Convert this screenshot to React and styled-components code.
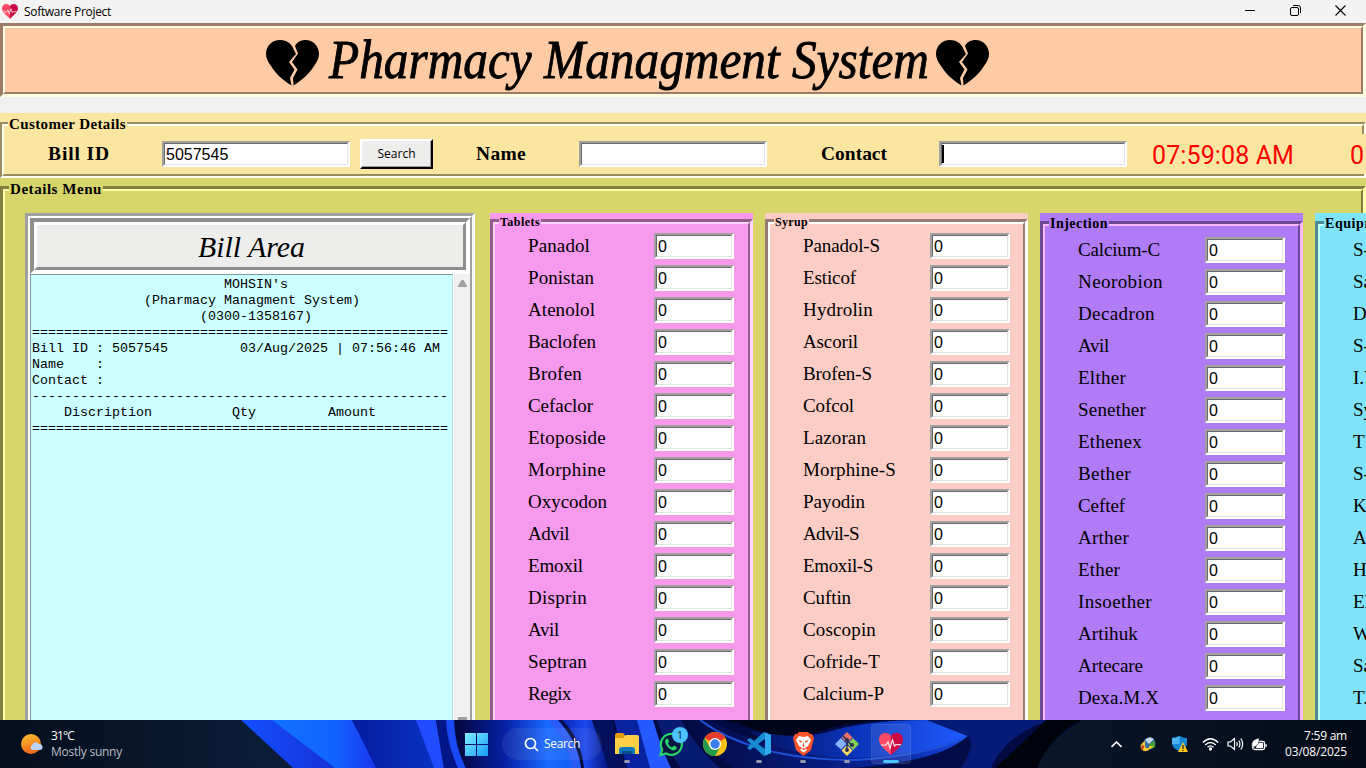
import React, { useLayoutEffect, useRef, useState } from "react";
import styled, { createGlobalStyle, css } from "styled-components";

const Global = createGlobalStyle`
  * { box-sizing: border-box; }
  html, body { margin: 0; padding: 0; overflow: hidden; background: #f0f0f0; }
  body { font-family: "Liberation Serif", serif; color: #000; }
`;

const Desktop = styled.div`
  width: 1366px;
  height: 768px;
  display: flex;
  flex-direction: column;
  overflow: hidden;
`;

/* Text stretched to a given width */
const FitBox = styled.span`
  display: block;
  width: ${(p) => p.$w}px;
  white-space: pre;
`;
const FitInner = styled.span`
  display: inline-block;
  transform-origin: 0 50%;
  white-space: pre;
`;
function Fit({ w, stretch, children }) {
  const ref = useRef(null);
  const [style, setStyle] = useState({});
  useLayoutEffect(() => {
    const exact = ref.current.getBoundingClientRect().width;
    setStyle(
      stretch
        ? { transform: `scaleX(${w / exact})` }
        : { letterSpacing: `${(w - exact) / children.length}px` }
    );
  }, []);
  return (
    <FitBox $w={w}>
      <FitInner ref={ref} style={style}>{children}</FitInner>
    </FitBox>
  );
}

/* Title bar */
const TitleBar = styled.header`
  height: 23px;
  flex: none;
  background: #f3f3f3;
  display: flex;
  align-items: center;
  padding: 0 20px 0 2px;
  font: 12px "Open Sans", "Noto Sans", sans-serif;
`;
const TitleText = styled.span`
  margin-left: 6px;
  flex: 1;
`;
const WindowButtons = styled.div`
  display: flex;
  gap: 34px;
  height: 20px;
  align-items: center;
  margin-bottom: 2px;
`;

/* Grooved borders */
const GrooveOuter = styled.div`
  border: solid;
  border-width: ${(p) => p.$o[0]}px ${(p) => p.$o[1]}px ${(p) => p.$o[1]}px ${(p) => p.$o[0]}px;
  border-color: ${(p) => `${p.$dark} ${p.$light} ${p.$light} ${p.$dark}`};
  flex: 1;
  display: flex;
  min-width: 0;
`;
const GrooveInner = styled.div`
  border: solid;
  border-width: ${(p) => p.$o[1]}px ${(p) => p.$o[0]}px ${(p) => p.$o[0]}px ${(p) => p.$o[1]}px;
  border-color: ${(p) => `${p.$light} ${p.$dark} ${p.$dark} ${p.$light}`};
  flex: 1;
  display: flex;
  min-width: 0;
`;
function Groove({ outer, inner, dark, light, children }) {
  return (
    <GrooveOuter $o={outer} $dark={dark} $light={light}>
      <GrooveInner $o={inner} $dark={dark} $light={light}>{children}</GrooveInner>
    </GrooveOuter>
  );
}

const Banner = styled.div`
  height: 74px;
  flex: none;
  display: flex;
  background: #ffcba4;
  margin-bottom: 16px;
`;
const BannerContent = styled.div`
  flex: 1;
  display: flex;
  align-items: flex-start;
  padding-left: 261px;
`;
const HeartSlot = styled.div`
  padding-top: 12px;
  height: 60px;
`;
const BannerText = styled.h1`
  margin: 2px 7px 0 9px;
  font: italic 55px/60px "Liberation Serif", serif;
  -webkit-text-stroke: 0.9px #000;
`;

const Frame = styled.section`
  position: relative;
  display: flex;
  background: ${(p) => p.$bg};
  padding-top: ${(p) => p.$pad}px;
  height: ${(p) => (p.$h ? p.$h + "px" : "auto")};
  flex: none;
`;
const Legend = styled.h2`
  position: absolute;
  margin: 0;
  left: ${(p) => p.$x}px;
  top: ${(p) => p.$y}px;
  padding: 0 1px;
  background: ${(p) => p.$bg};
  font: bold ${(p) => p.$size}px/16px "Liberation Serif", serif;
`;

const sunken = css`
  border: 2px solid;
  border-color: #a0a0a0 #fff #fff #a0a0a0;
`;
const EntryOuter = styled.div`
  ${sunken}
  width: ${(p) => p.$w}px;
  height: 26px;
  display: flex;
  flex: none;
  margin-left: ${(p) => p.$ml || 0}px;
`;
const EntryInner = styled.div`
  flex: 1;
  background: #fff;
  border: 1px solid;
  border-color: #696969 #e3e3e3 #e3e3e3 #696969;
  font: 16px/21px "Liberation Sans", sans-serif;
  padding-left: 1px;
  display: flex;
`;
const Caret = styled.i`
  width: 2px;
  height: 18px;
  margin: 1px 0 0 -1px;
  background: #000;
`;
function Entry({ w, ml, children }) {
  return (
    <EntryOuter $w={w} $ml={ml}>
      <EntryInner>{children}</EntryInner>
    </EntryOuter>
  );
}

const CustomerRow = styled.div`
  position: relative;
  z-index: 1;
  flex: 1;
  display: flex;
  align-items: flex-start;
  padding: 13px 0 0 44px;
`;
const FieldLabel = styled.div`
  font: bold 19.5px/26px "Liberation Serif", serif;
  margin: 2px 0 0 ${(p) => p.$ml || 0}px;
`;
const SearchButton = styled.button`
  width: 73px;
  height: 30px;
  margin: 0 0 0 10px;
  padding: 0;
  background: #ededeb;
  border: 2px solid;
  border-color: #fff #000 #000 #fff;
  box-shadow: inset -1px -1px 0 #a0a0a0;
  font: 12px/24px "Open Sans", sans-serif;
`;
const Lowered = styled.div`
  padding-top: 2px;
`;
const Clock = styled.div`
  margin: 4px 0 0 ${(p) => p.$ml}px;
  color: #f00;
  font: 25px/26px Roboto, sans-serif;
  flex: none;
`;
const EdgeFill = styled.div`
  position: absolute;
  right: 0;
  top: 21px;
  width: 4px;
  height: 40px;
  background: #fbe6a1;
`;

const DetailsBody = styled.div`
  flex: 1;
  display: flex;
  align-items: flex-start;
  padding: 22px 0 0 20px;
  height: 512px;
`;
const BillFrame = styled.div`
  width: 450px;
  height: 520px;
  flex: none;
  display: flex;
  background: #fff;
  margin-right: 15px;
`;
const BillColumn = styled.div`
  flex: 1;
  display: flex;
  flex-direction: column;
`;
const BillHeading = styled.div`
  height: 56px;
  display: flex;
  background: #ededeb;
  flex: none;
`;
const BillHeadingText = styled.h3`
  margin: 0 0 0 161px;
  font: italic 30px/44px "Liberation Serif", serif;
`;
const BillRow = styled.div`
  flex: 1;
  display: flex;
`;
const BillText = styled.pre`
  margin: 0 1px 0 0;
  width: 423px;
  background: #ccffff;
  border: 1px solid;
  border-color: #7a9a9a #b8e6e6 #b8e6e6 #7a9a9a;
  padding: 2px 1px 1px;
  font: 13.33px/16px "Liberation Mono", monospace;
`;
const Scrollbar = styled.div`
  flex: 1;
  background: #f0f0f0;
  display: flex;
  flex-direction: column;
  align-items: center;
  padding-top: 6px;
`;

const ItemPanel = styled(Frame)`
  height: 520px;
  width: 263px;
  margin-right: 12px;
`;
const ItemList = styled.div`
  flex: 1;
  padding: ${(p) => p.$top}px 0 0 33px;
`;
const ItemRow = styled.div`
  height: 32px;
  display: flex;
`;
const ItemName = styled.div`
  width: 126px;
  flex: none;
  font: 19px/26px "Liberation Serif", serif;
  white-space: nowrap;
`;
const Window = styled.main`
  height: 720px;
  flex: none;
  overflow: hidden;
`;

const PANELS = [
  {
    title: "Tablets", bg: "#f799ec", dark: "#945c8d", light: "#ffd5ff", pad: 6, size: 12, legendY: 1, lw: 40, gap: 0,
    items: [["Panadol", 62], ["Ponistan", 66], ["Atenolol", 67], ["Baclofen", 68], ["Brofen", 54], ["Cefaclor", 65], ["Etoposide", 78], ["Morphine", 78], ["Oxycodon", 79], ["Advil", 41], ["Emoxil", 55], ["Disprin", 59], ["Avil", 31], ["Septran", 59], ["Regix", 43]],
  },
  {
    title: "Syrup", bg: "#fccdc5", dark: "#977b76", light: "#ffffff", pad: 6, size: 12, legendY: 1, lw: 33, gap: 1,
    items: [["Panadol-S", 77], ["Esticof", 53], ["Hydrolin", 70], ["Ascoril", 55], ["Brofen-S", 69], ["Cofcol", 51], ["Lazoran", 63], ["Morphine-S", 93], ["Payodin", 62], ["Advil-S", 56], ["Emoxil-S", 70], ["Cuftin", 48], ["Coscopin", 73], ["Cofride-T", 77], ["Calcium-P", 81]],
  },
  {
    title: "Injection", bg: "#b07bf7", dark: "#6a4a94", light: "#f9b8ff", pad: 8, size: 14, legendY: 3, lw: 58, gap: 1,
    items: [["Calcium-C", 82], ["Neorobion", 85], ["Decadron", 77], ["Avil", 31], ["Elther", 48], ["Senether", 68], ["Ethenex", 64], ["Bether", 53], ["Ceftef", 47], ["Arther", 51], ["Ether", 42], ["Insoether", 74], ["Artihuk", 60], ["Artecare", 65], ["Dexa.M.X", 81]],
  },
  {
    title: "Equipment", bg: "#7fe4f9", dark: "#4c8995", light: "#bfffff", pad: 8, size: 14, legendY: 3, lw: 72, gap: 1,
    items: ["S-", "Sa", "D", "S-", "I.V", "Sy", "T", "S-", "K", "A", "H", "El", "W", "Sa", "T."].map((n) => [n, 0]),
  },
];

const RULE = "=".repeat(52);
const BILL = [
  " ".repeat(24) + "MOHSIN's",
  " ".repeat(14) + "(Pharmacy Managment System)",
  " ".repeat(21) + "(0300-1358167)",
  RULE,
  "Bill ID : 5057545         03/Aug/2025 | 07:56:46 AM",
  "Name    :",
  "Contact :",
  "-".repeat(52),
  "    Discription          Qty         Amount",
  RULE,
].join("\n");

/* Drawings */
const BrokenHeart = () => (
  <svg width="54" height="46" viewBox="0 0 54 46">
    <path d="M27 8L30 14L23 22L28.500 29.500L24 38L25.500 45.500C21 43 11 36 5 26C2 22 0 18 0 14C0 6 6 0 14 0C20 0 25 3 27 8Z" />
    <path d="M29 6C31 2 35 0 39.500 0C47 0 53 6 53 14C53 18 51 22 48 26C43 34 36 40 27.500 45.500L27 38L31.500 29.500L26 22L32 13.500Z" />
  </svg>
);
const HeartIcon = ({ size }) => (
  <svg width={size} height={size * 0.92} viewBox="0 0 24 22">
    <path d="M12 22C5 16 0 12 0 6.5C0 2.5 3 0 6.3 0C9 0 11 1.200 12 3Z" fill="#ff4a66" />
    <path d="M12 22C19 16 24 12 24 6.500C24 2.500 21 0 17.700 0C15 0 13 1.200 12 3Z" fill="#cc0a44" />
    <path d="M2 12H7L9 9L11 15L13.500 7L15.500 13L17 11.500H22" fill="none" stroke="#fbdde5" strokeWidth="1.300" />
  </svg>
);

const Taskbar = styled.footer`
  position: relative;
  height: 48px;
  flex: none;
  display: flex;
  align-items: center;
  overflow: hidden;
  background: #06111f;
  color: #fff;
  font: 12px/16px "Open Sans", "Noto Sans", sans-serif;
`;
const Wallpaper = styled.svg`
  position: absolute;
  inset: 0;
`;
const Weather = styled.div`
  position: relative;
  display: flex;
  align-items: center;
  gap: 7px;
  width: 454px;
  padding-left: 21px;
  flex: none;
`;
const Dim = styled.div`
  color: #b9bec6;
`;
const AppCell = styled.div`
  position: relative;
  width: 40px;
  height: 40px;
  margin: 0 2px;
  border-radius: 4px;
  display: flex;
  align-items: center;
  justify-content: center;
  flex: none;
  background: ${(p) => (p.$active ? "rgba(255,255,255,.09)" : "none")};
  box-shadow: ${(p) => (p.$active ? "inset 0 0 0 1px rgba(255,255,255,.07)" : "none")};
`;
const Indicator = styled.i`
  position: absolute;
  bottom: 1px;
  width: ${(p) => (p.$active ? 16 : 6)}px;
  height: 3px;
  border-radius: 2px;
  background: ${(p) => (p.$active ? "#4cc2ff" : "#9299ae")};
`;
const Badge = styled.b`
  position: absolute;
  left: 21px;
  top: 3px;
  width: 16px;
  height: 16px;
  border-radius: 8px;
  background: #4cc2ff;
  color: #10263a;
  text-align: center;
  font-weight: 400;
  font-size: 11px;
`;
const SearchPill = styled.div`
  position: relative;
  width: 100px;
  height: 32px;
  margin: 0 3px 0 4px;
  border-radius: 16px;
  background: rgba(255, 255, 255, 0.07);
  display: flex;
  align-items: center;
  gap: 5px;
  padding-left: 22px;
`;
const Tray = styled.div`
  position: relative;
  margin-left: auto;
  display: flex;
  align-items: center;
  padding-right: 19px;
`;
const TrayCell = styled.div`
  width: ${(p) => p.$w}px;
  display: flex;
  justify-content: center;
`;
const TrayClock = styled.div`
  width: 75px;
  display: flex;
  flex-direction: column;
  align-items: flex-end;
  white-space: nowrap;
`;

function Bloom() {
  return (
    <Wallpaper width="1366" height="48" viewBox="0 0 1366 48">
      <defs>
        <linearGradient id="base"><stop offset="0" stopColor="#050e1d" /><stop offset=".2" stopColor="#0b1d38" /><stop offset=".76" stopColor="#09162b" /><stop offset="1" stopColor="#030a16" /></linearGradient>
        <linearGradient id="b1"><stop offset="0" stopColor="#1250ff" /><stop offset="1" stopColor="#172bd0" /></linearGradient>
        <linearGradient id="b2"><stop offset="0" stopColor="#1173ff" /><stop offset=".6" stopColor="#1262ff" /><stop offset="1" stopColor="#1935ef" /></linearGradient>
        <linearGradient id="b3"><stop offset="0" stopColor="#061ba2" /><stop offset="1" stopColor="#0733c0" /></linearGradient>
        <linearGradient id="b4"><stop offset="0" stopColor="#02073d" /><stop offset=".4" stopColor="#0720a6" /><stop offset=".75" stopColor="#1769ff" /><stop offset="1" stopColor="#125bf2" /></linearGradient>
        <linearGradient id="b5"><stop offset="0" stopColor="#0526b5" /><stop offset=".5" stopColor="#1c48ee" /><stop offset="1" stopColor="#03127a" /></linearGradient>
        <linearGradient id="b6"><stop offset="0" stopColor="#020a42" /><stop offset=".7" stopColor="#0a2496" /><stop offset="1" stopColor="#1745e8" /></linearGradient>
        <linearGradient id="b7"><stop offset="0" stopColor="#04125e" /><stop offset=".5" stopColor="#0b35bd" /><stop offset="1" stopColor="#1f5cff" /></linearGradient>
      </defs>
      <rect width="1366" height="48" fill="url(#base)" />
      <path d="M241 0H1082C1060 14 1045 26 1037 48H293Z" fill="#020a42" />
      <path d="M241 0H290L350 48H293Z" fill="url(#b1)" />
      <path d="M272 0H352L378 48H335Z" fill="url(#b2)" />
      <path d="M352 0H420L440 48H376Z" fill="url(#b3)" />
      <path d="M416 0H436L444 48H434Z" fill="#214bff" />
      <path d="M436 0H448Q452 28 460 48H444Z" fill="#031689" />
      <path d="M446 0H454Q455 28 466 48H458Q447 24 446 0Z" fill="#1949f5" />
      <path d="M456 0H552Q572 20 578 48H466Q457 28 456 0Z" fill="url(#b4)" />
      <path d="M548 0H558Q578 22 581 48H572Q568 20 548 0Z" fill="#2a5cf5" />
      <path d="M562 0H592L609 48H584Q581 18 562 0Z" fill="url(#b5)" />
      <path d="M592 0H612L626 48H609Z" fill="#03105e" />
      <path d="M614 0H638L650 48H627Z" fill="#0822a0" />
      <path d="M637 0H653Q661 28 671 48H650Z" fill="#245aff" />
      <path d="M657 0H681Q698 30 720 48H681Q665 27 657 0Z" fill="#071b71" />
      <path d="M684 0H710Q775 39 900 32L968 16Q930 48 850 48H735Q699 26 684 0Z" fill="url(#b6)" />
      <path d="M725 0H890Q842 1 807 16Q773 18 748 7Z" fill="#00051b" />
      <path d="M748 10Q793 20 824 13Q865 0 927 0L968 16Q926 35 852 38Q780 36 748 10Z" fill="url(#b7)" />
      <path d="M700 0Q754 40 856 40Q924 36 968 17" fill="none" stroke="#1d50d8" strokeWidth="2" />
      <path d="M927 0H1050Q1005 15 991 48H950Q978 28 968 16Z" fill="#061b78" />
      <path d="M968 16Q976 25 961 48H850Q940 42 968 16Z" fill="#020d48" />
      <path d="M1046 0H1082Q1052 14 1037 48H995Q1022 24 1046 0Z" fill="#01040d" />
    </Wallpaper>
  );
}

function App() {
  return (
    <Desktop>
      <Global />
      <Window>
        <TitleBar>
          <HeartIcon size={16} />
          <TitleText><Fit w={87}>Software Project</Fit></TitleText>
          <WindowButtons>
            <svg width="11" height="11"><path d="M0 5.500H10" stroke="#000" /></svg>
            <svg width="11" height="11" fill="none" stroke="#000"><rect x=".5" y="2.500" width="8" height="8" rx="1.500" /><path d="M3 .5H8Q10.500 .5 10.500 3V8" /></svg>
            <svg width="11" height="11"><path d="M.5 .5L10.500 10.500M10.500 .5L.5 10.500" stroke="#000" strokeWidth="1.100" /></svg>
          </WindowButtons>
        </TitleBar>

        <Banner>
          <Groove outer={[3, 3]} inner={[2, 2]} dark="#9b7c64" light="#ffffe4">
            <BannerContent>
              <HeartSlot><BrokenHeart /></HeartSlot>
              <BannerText><Fit w={600} stretch>Pharmacy Managment System</Fit></BannerText>
              <HeartSlot><BrokenHeart /></HeartSlot>
            </BannerContent>
          </Groove>
        </Banner>

        <Frame $bg="#fbe6a1" $pad={9} $h={65}>
          <Groove outer={[2, 2]} inner={[2, 2]} dark="#998c62" light="#fffff0">
            <CustomerRow>
              <FieldLabel><Fit w={62}>Bill ID</Fit></FieldLabel>
              <Lowered><Entry w={188} ml={52}>5057545</Entry></Lowered>
              <SearchButton>Search</SearchButton>
              <FieldLabel $ml={43}><Fit w={50}>Name</Fit></FieldLabel>
              <Lowered><Entry w={188} ml={53} /></Lowered>
              <FieldLabel $ml={54}><Fit w={66}>Contact</Fit></FieldLabel>
              <Lowered><Entry w={188} ml={52}><Caret /></Entry></Lowered>
              <Clock $ml={25}><Fit w={142}>07:59:08 AM</Fit></Clock>
              <Clock $ml={56}>0</Clock>
            </CustomerRow>
          </Groove>
          <EdgeFill />
          <Legend $bg="#fbe6a1" $x={8} $y={3} $size={15}><Fit w={117}>Customer Details</Fit></Legend>
        </Frame>

        <Frame $bg="#d8d56a" $pad={8} $h={560}>
          <Groove outer={[3, 3]} inner={[2, 2]} dark="#827f40" light="#ffffa8">
            <DetailsBody>
              <BillFrame>
                <Groove outer={[3, 3]} inner={[2, 2]} dark="#a0a0a0" light="#ffffff">
                  <BillColumn>
                    <BillHeading>
                      <Groove outer={[4, 4]} inner={[3, 3]} dark="#8e8e8c" light="#ffffff">
                        <BillHeadingText><Fit w={107} stretch>Bill Area</Fit></BillHeadingText>
                      </Groove>
                    </BillHeading>
                    <BillRow>
                      <BillText>{BILL}</BillText>
                      <Scrollbar>
                        <svg width="9" height="440" fill="#a0a0a0"><path d="M0 6L3.500 0H5.500L9 6V7H0Z" /><path d="M0 437H9V440H0Z" /></svg>
                      </Scrollbar>
                    </BillRow>
                  </BillColumn>
                </Groove>
              </BillFrame>
              {PANELS.map((p) => (
                <ItemPanel key={p.title} $bg={p.bg} $pad={p.pad}>
                  <Groove outer={[3, 3]} inner={[2, 2]} dark={p.dark} light={p.light}>
                    <ItemList $top={p.pad === 8 ? 11 : 9}>
                      {p.items.map(([name, w], i) => (
                        <ItemRow key={i}>
                          <ItemName>{w ? <Fit w={w}>{name}</Fit> : name}</ItemName>
                          <Entry w={80} ml={p.gap}>0</Entry>
                        </ItemRow>
                      ))}
                    </ItemList>
                  </Groove>
                  <Legend $bg={p.bg} $x={9} $y={p.legendY} $size={p.size}><Fit w={p.lw}>{p.title}</Fit></Legend>
                </ItemPanel>
              ))}
            </DetailsBody>
          </Groove>
          <Legend $bg="#d8d56a" $x={9} $y={3} $size={15}><Fit w={92}>Details Menu</Fit></Legend>
        </Frame>
      </Window>

      <Taskbar>
        <Bloom />
        <Weather>
          <svg width="23" height="22" viewBox="0 0 23 22">
            <defs><linearGradient id="sun" x2="0.3" y2="1"><stop stopColor="#fcc22f" /><stop offset="1" stopColor="#f2691b" /></linearGradient></defs>
            <circle cx="10" cy="11" r="10" fill="url(#sun)" />
            <path d="M11 17a3 3 0 0 1 0-5a4 4 0 0 1 7-1a3 3 0 0 1 1 6Z" fill="#bdd3fa" />
          </svg>
          <div><Fit w={23}>31°C</Fit><Dim><Fit w={71}>Mostly sunny</Fit></Dim></div>
        </Weather>
        <AppCell>
          <svg width="23" height="23"><defs><linearGradient id="win" x2="1" y2="1"><stop stopColor="#82f0ff" /><stop offset="1" stopColor="#1499f5" /></linearGradient></defs><path d="M0 0H11V11H0ZM12 0H23V11H12ZM0 12H11V23H0ZM12 12H23V23H12Z" fill="url(#win)" /></svg>
        </AppCell>
        <SearchPill>
          <svg width="15" height="15" fill="none" stroke="#fff" strokeWidth="1.700"><circle cx="6.500" cy="6.500" r="5" /><path d="M10 10L14 14" /></svg>
          <Fit w={36}>Search</Fit>
        </SearchPill>
        <AppCell>
          <svg width="24" height="24"><path d="M0 3Q0 1 2 1H8L10 3V8H0Z" fill="#e09b0c" /><path d="M0 6H8L11 3H22Q24 3 24 5V22H0Z" fill="#ffcf48" /><path d="M4 22V18Q4 15 7 15H17Q20 15 20 18V22Z" fill="#1379bd" /><path d="M7 19H17V22H7Z" fill="#0b4f88" /></svg>
          <Indicator />
        </AppCell>
        <AppCell>
          <svg width="24" height="25" viewBox="0 0 24 24"><path d="M1.500 22.500L3.200 17A10.500 10.500 0 1 1 7.200 21Z" fill="#081540" stroke="#25d366" strokeWidth="2.200" /><path d="M8 6Q6 7 6 9Q7 15 14 18Q17 18 18 15L15 13L13 15Q10 14 9 11L10 9L9 6Z" fill="#25d366" /></svg>
          <Badge>1</Badge>
        </AppCell>
        <AppCell>
          <svg width="24" height="24" viewBox="0 0 24 24"><circle cx="12" cy="12" r="12" fill="#fbc116" /><path d="M12 12L1.600 6A12 12 0 0 1 22.400 6Z" fill="#e33b2e" /><path d="M1.600 6A12 12 0 0 0 12 24L17.200 15Q12 20 6.800 15Z" fill="#229b4a" /><circle cx="12" cy="12" r="6" fill="#fff" /><circle cx="12" cy="12" r="4.700" fill="#3b7ded" /></svg>
        </AppCell>
        <AppCell>
          <svg width="24" height="24" viewBox="0 0 24 24"><path d="M17 0L24 3V21L17 24L7 15L3 18L0 16L4 12L0 8L3 6L7 9ZM18 7L11 12L18 17Z" fill="#168bd2" fillRule="evenodd" /><path d="M18 .4L24 3V21L18 23.600Z" fill="#32aaf0" /></svg>
          <Indicator />
        </AppCell>
        <AppCell>
          <svg width="21" height="24" viewBox="0 0 21 24"><path d="M6 0H15L17 2L19 2L21 6L18 18L10.500 24L3 18L0 6L2 2H4Z" fill="#fb542b" /><path d="M6 4L10.500 5L15 4L18 8L15 14L12 16L14 18L10.500 20.500L7 18L9 16L6 14L3 8Z" fill="#fff" /><path d="M5 8L9 9L8 11ZM16 8L12 9L13 11ZM10.500 10L11.500 14L10.500 15L9.500 14ZM8 17L10.500 16L13 17L10.500 18Z" fill="#fb542b" /></svg>
          <Indicator />
        </AppCell>
        <AppCell>
          <svg width="24" height="24" viewBox="0 0 24 24"><path d="M12 0L17.500 5.500L12 11L6.500 5.500Z" fill="#f07167" /><path d="M6 6L11.500 12L6 17.500L0 12Z" fill="#83b3ff" /><path d="M18 6L24 12L18 18L12.500 12Z" fill="#88cd55" /><path d="M12 13L17.500 18.500L12 24L6.500 18.500Z" fill="#ffdc61" /><path d="M8 4L12 8V18M12 9L17 13" stroke="#263152" strokeWidth="1.500" fill="none" /><g fill="#263152"><circle cx="12" cy="8" r="2" /><circle cx="12" cy="18" r="2" /><circle cx="17" cy="13" r="2" /></g></svg>
          <Indicator />
        </AppCell>
        <AppCell $active><HeartIcon size={24} /><Indicator $active /></AppCell>
        <Tray>
          <TrayCell $w={32}><svg width="11" height="7" fill="none" stroke="#fff" strokeWidth="1.600"><path d="M.5 6L5.500 1L10.500 6" /></svg></TrayCell>
          <TrayCell $w={32}><svg width="16" height="15" viewBox="0 0 16 15"><circle cx="9.500" cy="6.500" r="6" fill="#326da9" /><path d="M5 3Q9-2 14 2L9 7Z" fill="#c1d9e9" /><path d="M9 7L15 4V10L11 12Z" fill="#3aa52a" /><path d="M5 4Q-2 8 2 13Q6 16 10 12L14 9H9V11Q5 12 5 8Z" fill="#f1c62e" /><path d="M2 8Q0 12 3 13L4 9Z" fill="#d92b1c" /></svg></TrayCell>
          <TrayCell $w={32}><svg width="16" height="16"><path d="M7.500 0Q11 2 15 2V8Q14 13 7.500 15Q1 13 0 8V2Q4 2 7.500 0Z" fill="#1787d5" /><path d="M7.500 0Q4 2 0 2V8H7.500Z" fill="#48b2f2" /><path d="M11 6L16 16H6Z" fill="#ffc51c" /><path d="M11 9V13M11 14V15" stroke="#222" strokeWidth="1.300" /></svg></TrayCell>
          <TrayCell $w={28}><svg width="17" height="13" fill="none" stroke="#fff" strokeWidth="1.300"><path d="M.8 4.500Q8.500-3 16.200 4.500M3.200 7Q8.500 2 13.800 7M5.500 9.300Q8.500 6.500 11.500 9.300" /><circle cx="8.500" cy="11" r="1" fill="#fff" /></svg></TrayCell>
          <TrayCell $w={22}><svg width="17" height="14" fill="none" stroke="#fff" strokeWidth="1.200"><path d="M1 5H3.500L7.500 1.500V12.500L3.500 9H1ZM9.500 5Q11 7 9.500 9M11.700 3.500Q14.200 7 11.700 10.500M13.800 1.500Q17.500 7 13.800 12.500" /></svg></TrayCell>
          <TrayCell $w={26}><svg width="16" height="13" fill="none" stroke="#fff" strokeWidth="1.300"><rect x="2.500" y="3.500" width="11" height="8" rx="1.500" /><path d="M15 6V9" /><path d="M6 5H12V10H5Z" fill="#fff" stroke="none" /><path d="M1 9Q-.5 3 5 1L8 0Q9 7 3 9L1 12" fill="#fff" stroke="#07121f" strokeWidth=".6" /></svg></TrayCell>
          <TrayClock><Fit w={43}>7:59 am</Fit><Fit w={62}>03/08/2025</Fit></TrayClock>
        </Tray>
      </Taskbar>
    </Desktop>
  );
}

export default App;
